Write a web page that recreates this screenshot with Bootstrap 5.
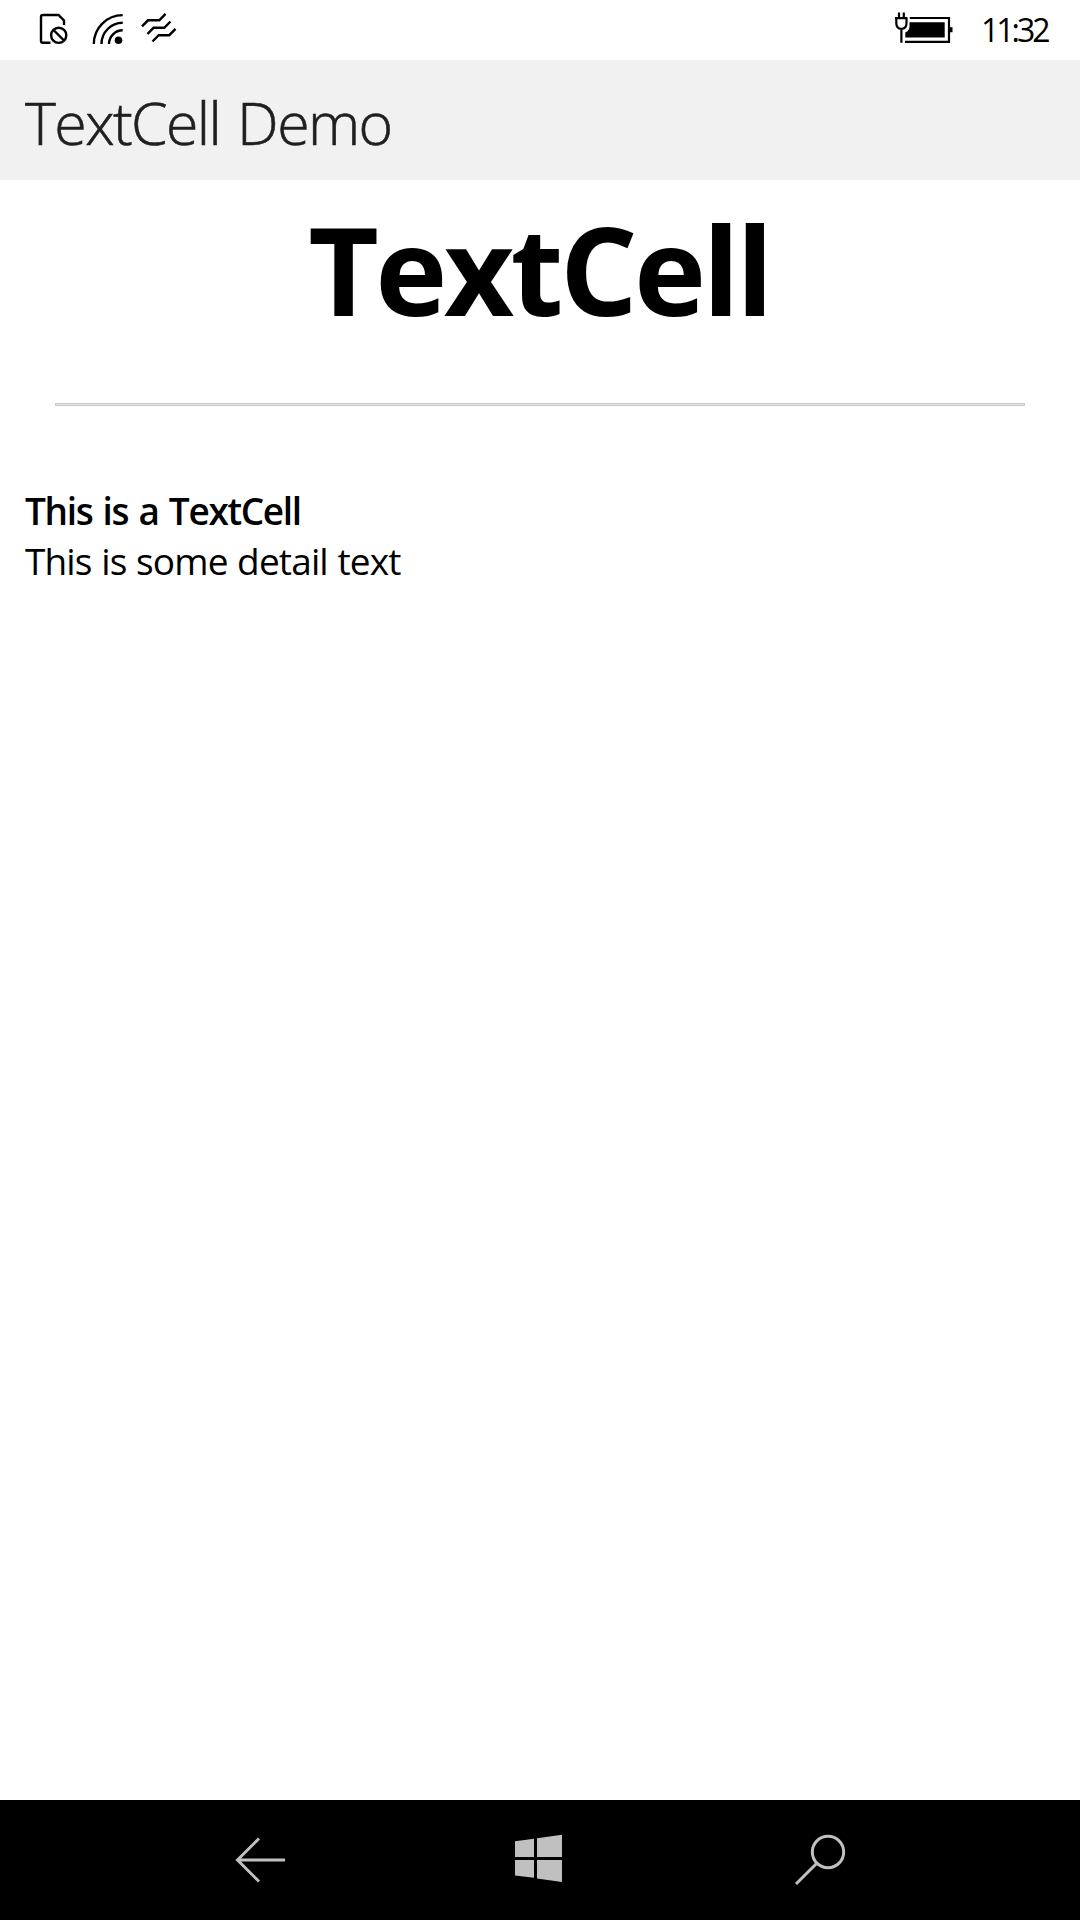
<!DOCTYPE html>
<html lang="en">
<head>
<meta charset="utf-8">
<meta name="viewport" content="width=device-width, initial-scale=1">
<title>TextCell Demo</title>
<link href="https://cdn.jsdelivr.net/npm/bootstrap@5.3.0/dist/css/bootstrap.min.css" rel="stylesheet">
<style>
body{font-family:"Open Sans","Noto Sans",sans-serif;color:#000;background:#fff;white-space:nowrap}
.status-bar{height:60px;padding-left:38px;padding-right:31px}
.status-bar svg{display:block}
.clock{font-size:32px;line-height:60px;letter-spacing:-3px;width:68px;margin-left:28px}
.title-bar{height:120px;background:#f1f1f1;padding:2px 25px 0}
.title-bar h1{font-size:59px;line-height:120px;font-weight:300;color:#1f1f1f;letter-spacing:-1.6px;word-spacing:3px;-webkit-text-stroke:.6px #1f1f1f}
.hero-title{font-size:122px;line-height:178px;font-weight:700;letter-spacing:-3.6px;padding-right:2px}
.divider{height:3px;margin:45px 55px 80px;background:#e6e6e6;border:1px solid #cacaca}
.text-cell{padding:0 25px;font-size:37px;line-height:50px}
.cell-title{letter-spacing:-1.35px;word-spacing:2px}
.cell-detail{letter-spacing:-.85px;word-spacing:.8px}
.nav-keys{height:120px}
.nav-keys svg{display:block}
</style>
</head>
<body>
<div class="vh-100 d-flex flex-column overflow-hidden">
  <div class="status-bar d-flex flex-shrink-0">
    <svg width="40" height="60" viewBox="38 0 40 60" fill="none" stroke="#000" stroke-width="2.4"><path d="M50.5 42.800H43q-2 0-2-2V17q0-2 2-2h15.500l5.500 5.500V25"/><circle cx="58.700" cy="35.300" r="7.600"/><path d="M53.500 30l10.500 10.500"/></svg>
    <svg width="60" height="60" viewBox="78 0 60 60" fill="none" stroke="#000" stroke-width="2.400"><path d="M93.800 44A28.900 28.900 0 0 1 122.700 15.100M101.500 44A21.200 21.200 0 0 1 122.700 22.800M109 44A13.700 13.700 0 0 1 122.700 30.300"/><circle cx="118.500" cy="40.300" r="3.800" fill="#000" stroke="none"/></svg>
    <svg width="44" height="60" viewBox="138 0 44 60" fill="none" stroke="#000" stroke-width="2.400"><path d="M142 26.300l6-6h11.300l6.200-6.500M147.500 34l6-6.200h10.800l6.200-6.300M152.500 41.500l6.200-6.300h10.600l6.200-6.300"/></svg>
    <svg class="ms-auto" width="60" height="60" viewBox="893 0 60 60"><path d="M909.800 18H949V41.800H905" fill="none" stroke="#000" stroke-width="2.200"/><path d="M949.500 27.300h3v5h-3zM909.500 22.300h35.200v15.200h-39.400V32.500q4.200-2 4.200-6z"/><path d="M899 12.500v5M903.800 12.500v5M895 18.200h12.400M896.300 18v5q0 5.800 5.100 5.800t5.100-5.800v-5M901.400 29v13.700" fill="none" stroke="#000" stroke-width="2.200"/></svg>
    <span class="clock">11:32</span>
  </div>
  <header class="title-bar flex-shrink-0"><h1 class="m-0">TextCell Demo</h1></header>
  <main class="flex-grow-1">
    <h2 class="hero-title text-center m-0">TextCell</h2>
    <div class="divider"></div>
    <div class="text-cell">
      <div class="cell-title fw-semibold">This is a TextCell</div>
      <div class="cell-detail">This is some detail text</div>
    </div>
  </main>
  <nav class="nav-keys bg-black d-flex flex-shrink-0 justify-content-center">
    <svg width="280" height="120" viewBox="120 0 280 120" fill="none" stroke="#c0c0c0" stroke-width="3"><path d="M285 60h-48M259 38.500L237.500 60 259 81.500"/></svg>
    <svg width="280" height="120" viewBox="400 0 280 120" fill="#c0c0c0"><path d="M515 41.300l19-2.500V57h-19zM537 38.300l25-3.600V57h-25zM515 60h19v17.800l-19-2.400zM537 60h25v22l-25-3.400z"/></svg>
    <svg width="280" height="120" viewBox="680 0 280 120" fill="none" stroke="#c0c0c0" stroke-width="3"><circle cx="828" cy="52" r="15.700"/><path d="M816.800 63.200L796 84"/></svg>
  </nav>
</div>
<script src="https://cdn.jsdelivr.net/npm/bootstrap@5.3.0/dist/js/bootstrap.bundle.min.js"></script>
</body>
</html>
